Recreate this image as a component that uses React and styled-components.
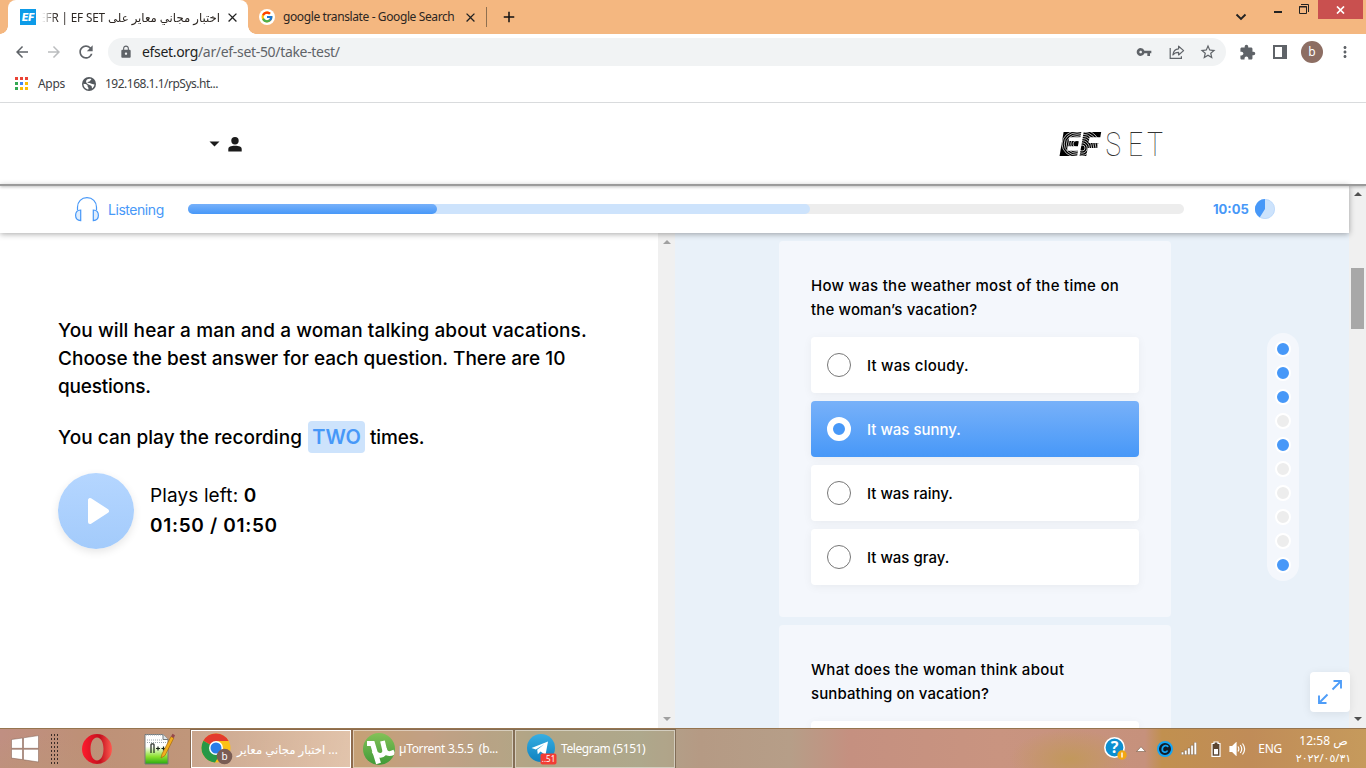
import React from "react";
import styled, { createGlobalStyle } from "styled-components";
import {
  MdArrowBack, MdArrowForward, MdRefresh, MdLock, MdVpnKey, MdStarBorder,
  MdExtension, MdClose, MdAdd, MdMoreVert,
} from "react-icons/md";
import { FcGoogle } from "react-icons/fc";

const ui = `"Noto Sans", "Open Sans", "DejaVu Sans", sans-serif`;
const brand = `Inter, "Liberation Sans", sans-serif`;

const GlobalStyle = createGlobalStyle`
  * { box-sizing: border-box; }
  body { margin: 0; overflow: hidden; background: #fff; }
  svg { display: block; flex: none; }
`;

const Screen = styled.div`
  width: 1366px;
  height: 768px;
  display: flex;
  flex-direction: column;
  overflow: hidden;
  font-family: ${brand};
  color: #000;
`;

/* ---------- browser chrome ---------- */

const TabStrip = styled.div`
  height: 34px;
  flex: none;
  display: flex;
  background: #f4b780;
  padding-left: 8px;
  font: 12px/34px ${ui};
  color: #2c2622;
`;

const ActiveTab = styled.div`
  width: 240px;
  display: flex;
  align-items: center;
  padding: 0 8px 0 12px;
  background: #fff;
  border-radius: 8px 8px 0 0;
  position: relative;
  &::before, &::after {
    content: "";
    position: absolute;
    bottom: 0;
    width: 8px;
    height: 8px;
  }
  &::before { left: -8px; background: radial-gradient(circle at 0 0, transparent 7.5px, #fff 8px); }
  &::after { right: -8px; background: radial-gradient(circle at 100% 0, transparent 7.5px, #fff 8px); }
`;

const EfFavicon = styled.div`
  width: 16px;
  height: 16px;
  background: #0d9be8;
  color: #fff;
  font: italic 900 10px/16px Inter, sans-serif;
  text-align: center;
`;

const ActiveTitle = styled.div`
  direction: rtl;
  width: 178px;
  margin: 0 5px 0 6px;
  height: 34px;
  white-space: nowrap;
  font-size: 11.7px;
  letter-spacing: -0.12px;
  mask-image: linear-gradient(to right, transparent, #000 14px);
`;

const InactiveTab = styled.div`
  width: 239px;
  display: flex;
  align-items: center;
  padding: 0 9px 0 11px;
`;

const InactiveTitle = styled.div`
  width: 180px;
  margin-left: 8px;
  white-space: nowrap;
  letter-spacing: ${(p) => p.$track || 0};
`;

const TabDivider = styled.div`
  width: 1px;
  height: 20px;
  margin: 7px 13px 0 -1px;
  background: #8f7050;
`;

const NewTab = styled.div`
  display: flex;
  align-items: center;
`;

const WindowControls = styled.div`
  margin-left: auto;
  display: flex;
  align-items: flex-start;
`;

const CloseWindow = styled.div`
  width: 45px;
  height: 19px;
  margin-right: 3px;
  background: #c9504f;
  display: flex;
  align-items: center;
  justify-content: center;
`;

const Toolbar = styled.div`
  height: 36px;
  flex: none;
  display: flex;
  align-items: center;
  padding: 0 0 0 13px;
  color: #5f6368;
`;

const NavButtons = styled.div`
  width: 95px;
  display: flex;
  align-items: center;
  gap: 13.5px;
`;

const Omnibox = styled.div`
  width: 1118px;
  height: 28px;
  border-radius: 14px;
  background: #f1f3f4;
  display: flex;
  align-items: center;
  padding: 0 9px 0 11px;
`;

const Url = styled.div`
  margin-left: 9px;
  flex: 1;
  font: 14px/28px ${ui};
  letter-spacing: -0.32px;
  b { font-weight: 400; color: #1e1f22; }
`;

const OmniIcons = styled.div`
  display: flex;
  align-items: center;
`;

const ToolbarIcons = styled.div`
  margin-left: 13px;
  display: flex;
  align-items: center;
`;

const Avatar = styled.div`
  width: 22px;
  height: 22px;
  margin: 0 13px 0 14px;
  border-radius: 50%;
  background: #8d6e63;
  color: #fff;
  font: 12px/21px ${ui};
  text-align: center;
`;

const BookmarksBar = styled.div`
  height: 33px;
  flex: none;
  display: flex;
  align-items: center;
  padding: 0 0 5px 15px;
  border-bottom: 1px solid #dcdee0;
  font: 12px/16px ${ui};
  color: #3c4043;
`;

const AppsGrid = styled.div`
  display: grid;
  grid-template-columns: repeat(3, 3px);
  gap: 2px;
`;

const AppsDot = styled.i`
  height: 3px;
  background: ${(p) => p.$c};
`;

const BookmarkLabel = styled.span`
  margin: 0 ${(p) => p.$after || 0} 0 ${(p) => p.$before};
  letter-spacing: ${(p) => p.$track || 0};
`;

/* ---------- site ---------- */

const SiteHeader = styled.header`
  height: 82px;
  flex: none;
  display: flex;
  align-items: center;
  justify-content: space-between;
  padding: 1px 203px 0 209px;
  border-bottom: 1px solid #999;
  box-shadow: 0 1px 0 #9c9c9c, 0 2px 3px rgba(0, 0, 0, 0.25);
  position: relative;
  z-index: 3;
`;

const Account = styled.div`
  display: flex;
  align-items: center;
  gap: 8px;
`;

const Viewport = styled.div`
  height: 543px;
  flex: none;
  display: flex;
`;

const Page = styled.main`
  width: 1349px;
  display: flex;
  flex-direction: column;
`;

const ProgressRow = styled.div`
  height: 48px;
  flex: none;
  display: flex;
  align-items: center;
  padding: 0 74px;
  color: #4798f8;
  background: #fff;
  box-shadow: 0 1px 6px rgba(0, 0, 0, 0.35);
  position: relative;
  z-index: 2;
`;

const Section = styled.span`
  width: 80px;
  margin-left: 8px;
  font-size: 14px;
  letter-spacing: -0.45px;
`;

const Track = styled.div`
  width: 996px;
  height: 10px;
  border-radius: 5px;
  background: #ededed;
  display: grid;
`;

const Fill = styled.div`
  grid-area: 1 / 1;
  width: ${(p) => p.$w}px;
  border-radius: 5px;
  background: ${(p) => (p.$done ? "linear-gradient(#77b1fa, #4798f8)" : "#cde3fc")};
`;

const Clock = styled.span`
  width: 42px;
  margin-left: 29px;
  font-size: 13px;
  font-weight: 700;
`;

const Panes = styled.div`
  flex: 1;
  display: flex;
  min-height: 0;
`;

const Instructions = styled.section`
  width: 658px;
  padding: 84px 60px 0 58px;
`;

const Paragraph = styled.p`
  margin: 0;
  font-size: 19px;
  line-height: 28px;
  font-weight: 450;
  white-space: nowrap;
`;

const Line = styled.span`
  display: block;
  letter-spacing: ${(p) => p.$track};
`;

const PlayLimit = styled.div`
  display: flex;
  align-items: center;
  height: 32px;
  margin-top: 20px;
  font-size: 19px;
  font-weight: 450;
  white-space: nowrap;
`;

const Count = styled.span`
  width: 57px;
  height: 32px;
  margin: 0 5px 0 0;
  border-radius: 4px;
  background: #cde3fc;
  color: #4798f8;
  font-size: 20px;
  font-weight: 600;
  line-height: 32px;
  text-align: center;
`;

const Words = styled.span`
  width: ${(p) => p.$w || "auto"};
  letter-spacing: ${(p) => p.$track || 0};
`;

const Player = styled.div`
  display: flex;
  align-items: center;
  gap: 16px;
  margin-top: 20px;
  font-size: 19px;
  line-height: 30px;
  b { font-weight: 600; }
`;

const PlayButton = styled.div`
  width: 76px;
  height: 76px;
  border-radius: 50%;
  display: flex;
  align-items: center;
  padding-left: 29px;
  background: linear-gradient(#b5d6ff, #a3cbfb);
  box-shadow: 0 3px 8px rgba(0, 0, 0, 0.1);
`;

const Scrollbar = styled.div`
  width: 17px;
  flex: none;
  display: flex;
  flex-direction: column;
  align-items: center;
  justify-content: space-between;
  background: #f0f0f0;
  color: ${(p) => p.$c};
  padding: 7px 0;
`;

const Thumb = styled.div`
  width: 13px;
  height: 61px;
  margin-top: -316px;
  background: #a8a8a8;
`;

const Questions = styled.section`
  width: 674px;
  position: relative;
  overflow: hidden;
  background: #e9f1f9;
  padding: 8px 0 0 104px;
`;

const Card = styled.article`
  width: 392px;
  padding: 32px;
  margin-bottom: 8px;
  border-radius: 4px;
  background: #f4f7fc;
`;

const Question = styled.h2`
  margin: 0 0 15px;
  padding-top: 1px;
  font-size: 15px;
  line-height: 24px;
  font-weight: 500;
  white-space: nowrap;
`;

const Options = styled.div`
  display: grid;
  gap: 8px;
`;

const Option = styled.div`
  height: 56px;
  padding-left: 16px;
  display: flex;
  align-items: center;
  gap: 16px;
  border-radius: 4px;
  background: ${(p) => (p.$on ? "linear-gradient(#78b1f9, #4798f8)" : "#fff")};
  color: ${(p) => (p.$on ? "#fff" : "#000")};
  box-shadow: 0 2px 10px rgba(0, 0, 0, 0.05);
  font-size: 15px;
  font-weight: 500;
  letter-spacing: ${(p) => p.$track || 0};
`;

const Radio = styled.i`
  width: 24px;
  height: 24px;
  border-radius: 50%;
  border: ${(p) => (p.$on ? "6px solid #fff" : "1px solid #777")};
  background: ${(p) => (p.$on ? "#4798f8" : "#fff")};
`;

const Dots = styled.nav`
  position: absolute;
  left: 592px;
  top: 100px;
  width: 32px;
  padding: 8px;
  border-radius: 16px;
  background: #f4f7fc;
  display: grid;
  gap: 8px;
`;

const Dot = styled.i`
  width: 16px;
  height: 16px;
  border-radius: 50%;
  border: 2px solid #fff;
  background: ${(p) => (p.$on ? "#4798f8" : "#ededed")};
`;

const ExpandButton = styled.div`
  position: absolute;
  left: 1310px;
  top: 672px;
  z-index: 4;
  width: 40px;
  height: 40px;
  border-radius: 4px;
  background: #fff;
  box-shadow: 0 2px 10px rgba(0, 0, 0, 0.08);
  display: flex;
  align-items: center;
  justify-content: center;
`;

/* ---------- taskbar ---------- */

const Taskbar = styled.footer`
  height: 40px;
  flex: none;
  display: flex;
  align-items: center;
  padding-left: 11px;
  border-top: 1px solid #96754f;
  font: 12px/16px ${ui};
  color: #fff;
  background:
    radial-gradient(ellipse 60px 30px at 1070px 30px, #c2985c, transparent),
    radial-gradient(ellipse 90px 40px at 40px 45px, #bd9379, transparent),
    linear-gradient(to right, #c08f82 0, #be9077 80px, #c0967a 190px, #cd9a70 360px, #c99a82 430px,
      #b4a184 530px, #b0a48c 640px, #b59a84 700px, #b69e88 790px, #c59080 850px, #c99480 1000px,
      #c6917c 1145px, #c1904f 1162px, #c08c58 1250px, #c69a5c 1366px);
`;

const Grip = styled.div`
  width: 9px;
  height: 31px;
  margin: 0 23px 0 11px;
  background: radial-gradient(circle, #3b2c27 0.7px, transparent 1.1px) 0 0 / 3px 4px;
`;

const Pinned = styled.div`
  margin: 0 ${(p) => p.$after} 0 ${(p) => p.$before};
`;

const TaskButton = styled.div`
  width: 160px;
  height: 38px;
  margin-right: 2px;
  display: flex;
  align-items: center;
  padding-left: 9px;
  white-space: nowrap;
  border: 1px solid ${(p) => (p.$active ? "#fff" : "rgba(255,255,255,.45)")};
  outline: 1px solid rgba(80, 60, 40, 0.5);
  background: ${(p) => (p.$active ? "linear-gradient(100deg, rgba(255,255,255,.15), rgba(255,255,255,.42))" : "rgba(170,180,140,.22)")};
`;

const TaskLabel = styled.span`
  margin-left: 4px;
  font-size: ${(p) => (p.$rtl ? "11.7px" : "12px")};
  letter-spacing: ${(p) => p.$track || 0};
  direction: ${(p) => (p.$rtl ? "rtl" : "ltr")};
`;

const Tray = styled.div`
  margin-left: auto;
  display: flex;
  align-items: center;
`;

const TraySlot = styled.div`
  margin: 0 ${(p) => p.$after || 0} 0 ${(p) => p.$before || 0};
`;

const Language = styled.span`
  margin: 0 12px;
  letter-spacing: -0.3px;
`;

const TrayClock = styled.div`
  width: 72px;
  text-align: center;
  padding-right: 13px;
  line-height: 17px;
  white-space: nowrap;
  letter-spacing: -0.45px;
`;

const TrayDate = styled.div`
  font-size: 11px;
  letter-spacing: -0.3px;
`;

/* ---------- drawings ---------- */

const Arrow = ({ down }) => (
  <svg width="8" height="4" viewBox="0 0 8 4" fill="currentColor">
    <path d={down ? "M0 0h8L4 4z" : "M0 4h8L4 0z"} />
  </svg>
);

const ShareIcon = () => (
  <svg width="16" height="16" viewBox="0 0 16 16" fill="none" stroke="#5f6368" strokeWidth="1.2">
    <path d="M1.2 4v10.4h11.2v-2.2" />
    <path d="M9.6 2.2v2.6C6 5 4.3 7.3 3.9 11c1.300-1.900 3-2.700 5.700-2.700V11l5-4.400z" strokeLinejoin="round" />
  </svg>
);

const GlobeIcon = () => (
  <svg width="14" height="14" viewBox="0 0 14 14">
    <circle cx="7" cy="7" r="7" fill="#54595e" />
    <path d="M1.500 6.800c1.500.2 3 .3 3.800 1.200.6.800 0 1.500.8 2.200.6.600.3 1.600.2 2.300C3.600 12.200 1.400 9.900 1.500 6.800zM5 2.500c1-.9 3-1 4.300-.5.2 1-1 1.200-1.300 2C7.600 5 5.500 4.400 5.300 5.600c.8.600 2.500.2 3.400 1 1 .6 2.300.4 3.800 1-.3 1.800-1.200 3-2.500 3.900-.3-1 .2-2-.8-2.800C8 8 6.500 7.500 5 6.500 3.800 5.500 3.700 3.700 5 2.500z" fill="#fff" />
  </svg>
);

const EfLogo = () => (
  <svg width="104" height="28" viewBox="0 0 104 28" overflow="visible">
    <defs>
      <clipPath id="ef-e">
        <text x="0.500" y="25.500" textLength="21" lengthAdjust="spacingAndGlyphs" fontFamily="Inter" fontStyle="italic" fontWeight="900" fontSize="33">E</text>
      </clipPath>
      <clipPath id="ef-f">
        <text x="20.500" y="25.500" textLength="20" lengthAdjust="spacingAndGlyphs" fontFamily="Inter" fontStyle="italic" fontWeight="900" fontSize="33">F</text>
      </clipPath>
    </defs>
    <g clipPath="url(#ef-e)">
      <rect width="46" height="28" fill="#000" />
      <g fill="none" stroke="#fff" strokeWidth=".7">
        {[4, 6.2, 8.4, 10.600, 12.800, 15].map((r) => <ellipse key={r} cx="18" cy="14" rx={r} ry={r * 0.88} />)}
      </g>
    </g>
    <g clipPath="url(#ef-f)">
      <rect width="46" height="28" fill="#000" />
      <g fill="none" stroke="#fff" strokeWidth=".7">
        {[3, 5.2, 7.4, 9.600, 11.800, 14, 16.200, 18.400].map((r) => <ellipse key={r} cx="23" cy="18" rx={r} ry={r} />)}
      </g>
    </g>
    <g fontFamily="Roboto, Inter, sans-serif" fontWeight="100" fontSize="34" fill="#333">
      <text x="46.500" y="25.500" textLength="15.500" lengthAdjust="spacingAndGlyphs">S</text>
      <text x="69" y="25.500" textLength="15" lengthAdjust="spacingAndGlyphs">E</text>
      <text x="88" y="25.500" textLength="16" lengthAdjust="spacingAndGlyphs">T</text>
    </g>
  </svg>
);

const Headphones = () => (
  <svg width="26" height="26" viewBox="0 0 26 26" fill="none" stroke="#4798f8" strokeWidth="1.200">
    <path d="M3.500 14.300V11.200C3.500 5.500 7.500 1.700 13 1.700s9.500 3.800 9.500 9.500v3.100" />
    <path d="M6.700 14v10.600C3.700 24.500 1.600 22.300 1.600 19.300S3.700 14.100 6.700 14z" fill="#dfedfd" />
    <path d="M19.300 14v10.600c3-.1 5.100-2.300 5.100-5.300S22.300 14.100 19.300 14z" fill="#dfedfd" />
  </svg>
);

const Pie = () => (
  <svg width="20" height="20" viewBox="0 0 20 20">
    <circle cx="10" cy="10" r="9.700" fill="#cde3fc" stroke="#a8cdf9" strokeWidth=".6" />
    <path d="M10 10V0A10 10 0 0 0 4.700 18.500z" fill="#4798f8" />
  </svg>
);

const ChromeLogo = () => (
  <svg width="32" height="32" viewBox="0 0 32 32">
    <circle cx="15" cy="15" r="14.500" fill="#fbc116" />
    <path d="M15 15 2.400 7.800A14.500 14.500 0 0 1 27.600 8H15z" fill="#e33b2e" />
    <path d="M15 15 2.400 7.800A14.500 14.500 0 0 0 14 29.500L21 18z" fill="#269847" />
    <circle cx="15" cy="15" r="7" fill="#fff" />
    <circle cx="15" cy="15" r="5.500" fill="#2a7de9" />
    <circle cx="23.500" cy="23.500" r="7.800" fill="#795c54" />
    <text x="23.500" y="27.300" textAnchor="middle" fontFamily="Noto Sans" fontSize="10" fill="#fff">b</text>
  </svg>
);

const TorrentLogo = () => (
  <svg width="32" height="32" viewBox="0 0 32 32">
    <defs>
      <linearGradient id="ut" x2="0" y2="1"><stop stopColor="#83c258" /><stop offset="1" stopColor="#3f9a38" /></linearGradient>
      <clipPath id="utc"><circle cx="16" cy="16" r="16" /></clipPath>
    </defs>
    <circle cx="16" cy="16" r="16" fill="url(#ut)" />
    <g clipPath="url(#utc)" fill="none" stroke="#fff">
      <path d="M4 10.500h5.500l6 20" strokeWidth="5" />
      <path d="M11 18c2 6 12 6 10.500-1.500L19.500 8M21.500 16c1 4.500 4 6 10 3" strokeWidth="4.800" />
    </g>
  </svg>
);

const TelegramLogo = () => (
  <svg width="32" height="32" viewBox="0 0 32 32">
    <defs><linearGradient id="tg" x2="0" y2="1"><stop stopColor="#37aee2" /><stop offset="1" stopColor="#0f82c0" /></linearGradient></defs>
    <circle cx="16" cy="15" r="14" fill="url(#tg)" />
    <path d="M6.500 15 23 8.500 20.500 22l-5-3.500-2.700 2.800-.6-4.500 7-5.500-8.400 5.200z" fill="#fff" />
    <rect x="15.500" y="20.500" width="16" height="11" rx="2" fill="#f23c34" />
    <text x="23.500" y="29" textAnchor="middle" fontFamily="Noto Sans" fontSize="8" fill="#fff">..51</text>
  </svg>
);

const WindowsLogo = () => (
  <svg width="28" height="28" viewBox="0 0 28 28" fill="#fff" stroke="#7d5c50" strokeWidth=".5">
    <path d="M.5 4.500 11.500 3v10.300H.5zM12.500 2.800 27.500.6v12.700h-15zM.5 14.300h11v10.300l-11-1.500zM12.500 14.300h15V27l-15-2.200z" />
  </svg>
);

const OperaLogo = () => (
  <svg width="30" height="30" viewBox="0 0 30 30">
    <defs><linearGradient id="op"><stop stopColor="#ff1b2d" /><stop offset=".6" stopColor="#c3111e" /><stop offset="1" stopColor="#ff5a50" /></linearGradient></defs>
    <path fillRule="evenodd" fill="url(#op)" d="M15 0a15 15 0 1 0 0 30 15 15 0 0 0 0-30zm0 3.500c4 0 6.500 5 6.500 11.500S19 26.500 15 26.500 8.500 21.500 8.500 15 11 3.500 15 3.500z" />
  </svg>
);

const NotepadLogo = () => (
  <svg width="31" height="32" viewBox="0 0 31 32">
    <defs><linearGradient id="np" x2="0" y2="1"><stop offset=".4" stopColor="#fff" /><stop offset=".75" stopColor="#8be02e" /><stop offset="1" stopColor="#27a811" /></linearGradient></defs>
    <path d="M1 1.500h18l5 5V31H1z" fill="url(#np)" stroke="#75797b" />
    <path d="M2 2h17M3 7h16M3 9.500h19" stroke="#9ba6ad" strokeDasharray="1 1" />
    <path d="M19 1.500v5h5" fill="#dfe6ea" stroke="#75797b" />
    <path d="M7 20v-8.500c0-1 3-1 3 0V20M12 15.500h4M14 13.500v4M17.500 15.500h4M19.500 13.500v4" fill="none" stroke="#1c231c" strokeWidth="1.200" />
    <path d="m17 25 1-4L27 3.500l2.800 1.500L21 22.500z" fill="#f3ae1d" stroke="#a66a10" strokeWidth=".7" />
    <path d="M27 3.500 28.500.7l2.500 1.500L29.800 5z" fill="#94474b" />
  </svg>
);

const HelpIcon = () => (
  <svg width="23" height="23" viewBox="0 0 23 23" overflow="visible">
    <circle cx="10.500" cy="10.500" r="9.700" fill="#0c8fd0" stroke="#fff" strokeWidth="1.600" />
    <text x="10.500" y="16.200" textAnchor="middle" fontFamily="Noto Sans" fontWeight="700" fontSize="16" fill="#fff">?</text>
    <circle cx="18" cy="18" r="4.700" fill="#f3a712" />
    <path d="M18 15.500v5" stroke="#fff" strokeWidth="1.400" />
  </svg>
);

const ChevronUp = () => (
  <svg width="10" height="6" viewBox="0 0 10 6"><path d="M.5 5.500 5 .8l4.500 4.700z" fill="#fff" stroke="#755b45" strokeWidth=".6" /></svg>
);

const CIcon = () => (
  <svg width="16" height="16" viewBox="0 0 16 16">
    <circle cx="8" cy="8" r="7" fill="#111c28" stroke="#14a5f4" strokeWidth="2" />
    <path d="M11 6.200C10.500 3.800 6 4 5.300 7.700c-.6 4 4 4.500 5.200 1.800" fill="none" stroke="#14a5f4" strokeWidth="1.700" />
  </svg>
);

const SignalIcon = () => (
  <svg width="16" height="13" viewBox="0 0 16 13" fill="#fff" stroke="#644e38" strokeWidth=".4">
    <path d="M.3 10h2.400v2.700H.3zM3.500 8.300h2.400v4.400H3.500zM6.700 6h2.400v6.700H6.700zM9.900 3.300h2.400v9.400H9.900zM13.100.3h2.500v12.400h-2.500z" />
  </svg>
);

const BatteryIcon = () => (
  <svg width="10" height="16" viewBox="0 0 10 16">
    <path d="M1 2.500h2V1h4v1.500h2v12.800H1z" fill="#5c4632" stroke="#fff" strokeWidth="1.200" />
    <path d="M3 8h4v5.300H3z" fill="#fff" />
  </svg>
);

const SpeakerIcon = () => (
  <svg width="17" height="14" viewBox="0 0 17 14" fill="none" stroke="#fff" strokeWidth="1.200">
    <path d="M1 4.500h2.500L7 1v12L3.500 9.500H1z" fill="#fff" />
    <path d="M9 4.500c1 1.500 1 3.500 0 5M11.300 3c1.800 2.500 1.800 5.500 0 8M13.500 1.500c2.700 3.500 2.700 7.500 0 11" />
  </svg>
);

/* ---------- data ---------- */

const appColors = ["#ea4335", "#ea4335", "#ea4335", "#34a853", "#4285f4", "#fbbc05", "#34a853", "#fbbc05", "#fbbc05"];
const answers = [
  { text: "It was cloudy.", track: "0.2px" },
  { text: "It was sunny.", on: true },
  { text: "It was rainy." },
  { text: "It was gray." },
];
const answered = [1, 1, 1, 0, 1, 0, 0, 0, 0, 1];

export default function App() {
  return (
    <Screen>
      <GlobalStyle />
      <TabStrip>
        <ActiveTab>
          <EfFavicon>EF</EfFavicon>
          <ActiveTitle>اختبار مجاني معاير على EFR | EF SET</ActiveTitle>
          <MdClose size={15} color="#222" />
        </ActiveTab>
        <InactiveTab>
          <svg width="16" height="16" viewBox="0 0 16 16">
            <circle cx="8" cy="8" r="8" fill="#fff" />
            <g transform="translate(1.500 1.500)"><FcGoogle size={13} /></g>
          </svg>
          <InactiveTitle $track="-0.39px">google translate - Google Search</InactiveTitle>
          <MdClose size={15} color="#222" />
        </InactiveTab>
        <TabDivider />
        <NewTab><MdAdd size={18} color="#111" /></NewTab>
        <WindowControls>
          <svg width="131" height="34" viewBox="0 0 131 34" fill="none" stroke="#222">
            <path d="M49.500 14.500l4.500 4.500 4.500-4.500" strokeWidth="1.900" />
            <path d="M87 12h8" strokeWidth="2" />
            <path d="M112.500 6.500h7v7h-7zM112 7h8" strokeWidth="1" />
            <path d="M114 4.500h7.500V12" strokeWidth="1" />
          </svg>
          <CloseWindow>
            <svg width="9" height="8" viewBox="0 0 9 8" stroke="#fff" strokeWidth="1.700"><path d="M1 .5l7 7M8 .5l-7 7" /></svg>
          </CloseWindow>
        </WindowControls>
      </TabStrip>

      <Toolbar>
        <NavButtons>
          <MdArrowBack size={18} />
          <MdArrowForward size={18} color="#bbbdbf" />
          <MdRefresh size={20} />
        </NavButtons>
        <Omnibox>
          <MdLock size={14} />
          <Url><b>efset.org</b>/ar/ef-set-50/take-test/</Url>
          <OmniIcons>
            <MdVpnKey size={16} />
            <TraySlot $before="17px" $after="14px"><ShareIcon /></TraySlot>
            <MdStarBorder size={18} />
          </OmniIcons>
        </Omnibox>
        <ToolbarIcons>
          <MdExtension size={17} />
          <TraySlot $before="17px">
            <svg width="14" height="14" viewBox="0 0 14 14">
              <path fillRule="evenodd" fill="#5f6368" d="M0 0h14v14H0zM2 2v10h7V2z" />
            </svg>
          </TraySlot>
          <Avatar>b</Avatar>
          <MdMoreVert size={18} />
        </ToolbarIcons>
      </Toolbar>

      <BookmarksBar>
        <AppsGrid>{appColors.map((c, i) => <AppsDot key={i} $c={c} />)}</AppsGrid>
        <BookmarkLabel $before="10px" $after="17px" $track="-0.3px">Apps</BookmarkLabel>
        <GlobeIcon />
        <BookmarkLabel $before="9px" $track="-0.5px">192.168.1.1/rpSys.ht...</BookmarkLabel>
      </BookmarksBar>

      <SiteHeader>
        <Account>
          <svg width="11" height="6" viewBox="0 0 11 6"><path d="M.5.5h10l-5 5z" fill="#1b1b1b" /></svg>
          <svg width="14" height="15" viewBox="0 0 14 15" fill="#1b1b1b">
            <circle cx="7" cy="3.700" r="3.700" />
            <path d="M.3 14.500V12c0-2.200 2.500-3.300 6.700-3.300s6.700 1.100 6.700 3.300v2.500z" />
          </svg>
        </Account>
        <EfLogo />
      </SiteHeader>

      <Viewport>
        <Page>
          <ProgressRow>
            <Headphones />
            <Section>Listening</Section>
            <Track>
              <Fill $w={622} />
              <Fill $w={249} $done />
            </Track>
            <Clock>10:05</Clock>
            <Pie />
          </ProgressRow>
          <Panes>
            <Instructions>
              <Paragraph>
                <Line $track="0.1px">You will hear a man and a woman talking about vacations.</Line>
                <Line $track="0.01px">Choose the best answer for each question. There are 10</Line>
                <Line $track="-0.2px">questions.</Line>
              </Paragraph>
              <PlayLimit>
                <Words $w="250px" $track="0.06px">You can play the recording</Words>
                <Count>TWO</Count>
                <Words $track="-0.15px">times.</Words>
              </PlayLimit>
              <Player>
                <PlayButton>
                  <svg width="23" height="28" viewBox="0 0 23 28"><path d="M3 3v22L20 14z" fill="#fff" stroke="#fff" strokeWidth="4" strokeLinejoin="round" /></svg>
                </PlayButton>
                <div>
                  <Line $track="0.12px">Plays left: <b>0</b></Line>
                  <Line $track="0.68px"><b>01:50 / 01:50</b></Line>
                </div>
              </Player>
            </Instructions>
            <Scrollbar $c="#a0a0a0"><Arrow /><Arrow down /></Scrollbar>
            <Questions>
              <Card>
                <Question>
                  <Line $track="0.28px">How was the weather most of the time on</Line>
                  <Line $track="0.15px">the woman’s vacation?</Line>
                </Question>
                <Options>
                  {answers.map((a) => (
                    <Option key={a.text} $on={a.on} $track={a.track}><Radio $on={a.on} />{a.text}</Option>
                  ))}
                </Options>
              </Card>
              <Card>
                <Question>
                  <Line $track="0.29px">What does the woman think about</Line>
                  <Line $track="0.1px">sunbathing on vacation?</Line>
                </Question>
                <Options><Option /></Options>
              </Card>
              <Dots>{answered.map((on, i) => <Dot key={i} $on={on} />)}</Dots>
            </Questions>
          </Panes>
        </Page>
        <Scrollbar $c="#505050"><Arrow /><Thumb /><Arrow down /></Scrollbar>
      </Viewport>
      <ExpandButton>
        <svg width="26" height="26" viewBox="0 0 26 26" fill="none" stroke="#4f9df8" strokeWidth="1.900">
          <path d="M15.500 10.500l8.500-8.500M16.500 2h7.500v7.500M10.500 15.500l-8.500 8.500M2 16.500v7.500h7.500" />
        </svg>
      </ExpandButton>

      <Taskbar>
        <WindowsLogo />
        <Grip />
        <OperaLogo />
        <Pinned $before="32px" $after="16px"><NotepadLogo /></Pinned>
        <TaskButton $active>
          <ChromeLogo />
          <TaskLabel $rtl>... اختبار مجاني معاير</TaskLabel>
        </TaskButton>
        <TaskButton>
          <TorrentLogo />
          <TaskLabel $track="-0.33px">µTorrent 3.5.5&nbsp; (b...</TaskLabel>
        </TaskButton>
        <TaskButton>
          <TelegramLogo />
          <TaskLabel $track="-0.4px">Telegram (5151)</TaskLabel>
        </TaskButton>
        <Tray>
          <HelpIcon />
          <TraySlot $before="9px" $after="11px"><ChevronUp /></TraySlot>
          <CIcon />
          <TraySlot $before="8px" $after="14px"><SignalIcon /></TraySlot>
          <BatteryIcon />
          <TraySlot $before="8px"><SpeakerIcon /></TraySlot>
          <Language>ENG</Language>
          <TrayClock>
            <div>12:58 ص</div>
            <TrayDate>٢٠٢٢/٠٥/٣١</TrayDate>
          </TrayClock>
        </Tray>
      </Taskbar>
    </Screen>
  );
}
